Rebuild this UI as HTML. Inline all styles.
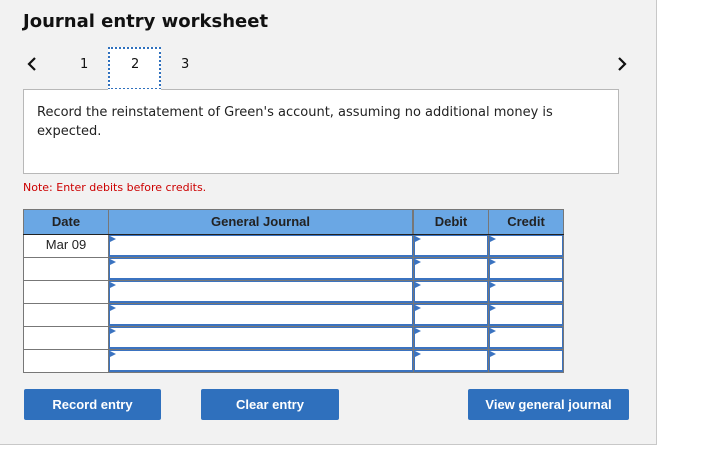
<!DOCTYPE html>
<html><head><style>
body{margin:0;width:728px;height:473px;background:#fff;position:relative;font-family:"DejaVu Sans","Liberation Sans",sans-serif;overflow:hidden}
.a{position:absolute}
.panel{left:0;top:0;width:656px;height:444px;background:#f2f2f2;border-right:1px solid #c8c8c8;border-bottom:1px solid #c8c8c8}
h1{position:absolute;left:23px;top:11px;margin:0;font-size:18px;font-weight:bold;color:#111}
.tab{font-size:13px;color:#111}
.hd{background:#6aa7e4;font-family:"Liberation Sans",sans-serif;font-weight:bold;font-size:13px;color:#222;text-align:center;line-height:24px;box-sizing:border-box}
.cell{box-sizing:border-box;background:#fff;border:1px solid #3b73c0;border-bottom:2px solid #3b73c0}
.cell:before{content:"";position:absolute;left:0;top:0;border-left:6px solid #3b73c0;border-top:3px solid transparent;border-bottom:3px solid transparent}
.dc{box-sizing:border-box;background:#fff;font-family:"Liberation Sans",sans-serif;font-size:13px;color:#222;text-align:center;line-height:20px}
.btn{background:#2f70bd;color:#fff;font-family:"Liberation Sans",sans-serif;font-weight:bold;font-size:13px;text-align:center;line-height:31px;border-radius:2px;height:31px;top:389px}
</style></head><body>
<div class="a panel"></div>
<h1>Journal entry worksheet</h1>
<svg class="a" style="left:26px;top:56px" width="12" height="16"><path d="M9 2 L3 8 L9 14" stroke="#111" stroke-width="2.2" fill="none"/></svg>
<svg class="a" style="left:616px;top:56px" width="12" height="16"><path d="M3 2 L9 8 L3 14" stroke="#111" stroke-width="2.2" fill="none"/></svg>
<div class="a tab" style="left:80px;top:57px">1</div>
<div class="a" style="left:108px;top:47px;width:53px;height:43px;background:#fff;border:2px dotted #2f70bd;box-sizing:border-box"></div>
<div class="a tab" style="left:131px;top:57px">2</div>
<div class="a tab" style="left:181px;top:57px">3</div>
<div class="a" style="left:23px;top:89px;width:596px;height:85px;background:#fff;border:1px solid #b8b8b8;box-sizing:border-box;border-top:none"></div>
<div class="a" style="left:23px;top:89px;width:85px;height:1px;background:#b8b8b8"></div>
<div class="a" style="left:161px;top:89px;width:458px;height:1px;background:#b8b8b8"></div>
<div class="a" style="left:37px;top:103px;font-size:13px;line-height:19px;color:#222;width:570px">Record the reinstatement of Green's account, assuming no additional money is expected.</div>
<div class="a" style="left:23px;top:181px;font-size:11px;color:#cc0000">Note: Enter debits before credits.</div>
<div class="a" style="left:23px;top:209px;width:541px;height:164px;background:#777"></div>
<div class="a hd" style="left:24px;top:210px;width:84px;height:24px">Date</div>
<div class="a hd" style="left:109px;top:210px;width:303px;height:24px">General Journal</div>
<div class="a hd" style="left:414px;top:210px;width:74px;height:24px">Debit</div>
<div class="a hd" style="left:489px;top:210px;width:74px;height:24px">Credit</div>
<div class="a" style="left:23px;top:234px;width:541px;height:1px;background:#222"></div>
<div id="rows"></div>
<script>
var h='';for(var r=0;r<6;r++){var t=235+r*23;
h+='<div class="a dc" style="left:24px;top:'+t+'px;width:84px;height:22px">'+(r==0?'Mar 09':'')+'</div>';
h+='<div class="a cell" style="left:109px;top:'+t+'px;width:304px;height:22px"></div>';
h+='<div class="a cell" style="left:414px;top:'+t+'px;width:74px;height:22px"></div>';
h+='<div class="a cell" style="left:489px;top:'+t+'px;width:74px;height:22px"></div>';}
document.getElementById('rows').innerHTML=h;
</script>
<div class="a btn" style="left:24px;width:137px">Record entry</div>
<div class="a btn" style="left:201px;width:138px">Clear entry</div>
<div class="a btn" style="left:468px;width:161px">View general journal</div>
</body></html>
